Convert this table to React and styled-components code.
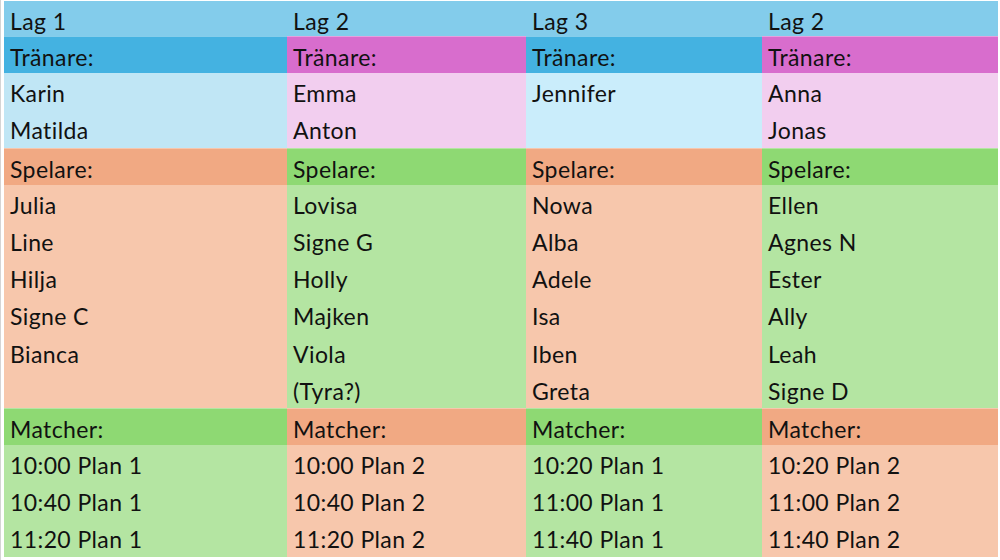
import React from 'react'
import styled, { createGlobalStyle } from 'styled-components'

const colors = {
  sky: '#83cceb',
  blue: '#44b2e1',
  blueLight: '#c0e6f5',
  blueLighter: '#caedfb',
  pink: '#d86dcd',
  pinkLight: '#f2ceef',
  orange: '#f1a983',
  orangeLight: '#f7c7ac',
  green: '#8ed973',
  greenLight: '#b4e5a2'
}

const teams = [
  {
    name: 'Lag 1',
    width: 283,
    coach: ['blue', 'blueLight'],
    player: ['orange', 'orangeLight'],
    match: ['green', 'greenLight'],
    coaches: ['Karin', 'Matilda'],
    players: ['Julia', 'Line', 'Hilja', 'Signe C', 'Bianca', ''],
    matches: ['10:00 Plan 1', '10:40 Plan 1', '11:20 Plan 1']
  },
  {
    name: 'Lag 2',
    width: 239,
    coach: ['pink', 'pinkLight'],
    player: ['green', 'greenLight'],
    match: ['orange', 'orangeLight'],
    coaches: ['Emma', 'Anton'],
    players: ['Lovisa', 'Signe G', 'Holly', 'Majken', 'Viola', '(Tyra?)'],
    matches: ['10:00 Plan 2', '10:40 Plan 2', '11:20 Plan 2']
  },
  {
    name: 'Lag 3',
    width: 236,
    coach: ['blue', 'blueLighter'],
    player: ['orange', 'orangeLight'],
    match: ['green', 'greenLight'],
    coaches: ['Jennifer', ''],
    players: ['Nowa', 'Alba', 'Adele', 'Isa', 'Iben', 'Greta'],
    matches: ['10:20 Plan 1', '11:00 Plan 1', '11:40 Plan 1']
  },
  {
    name: 'Lag 2',
    width: 236,
    coach: ['pink', 'pinkLight'],
    player: ['green', 'greenLight'],
    match: ['orange', 'orangeLight'],
    coaches: ['Anna', 'Jonas'],
    players: ['Ellen', 'Agnes N', 'Ester', 'Ally', 'Leah', 'Signe D'],
    matches: ['10:20 Plan 2', '11:00 Plan 2', '11:40 Plan 2']
  }
]

const GlobalStyle = createGlobalStyle`
  html, body {
    margin: 0;
    background: #ffffff;
  }
  body {
    font-family: Lato, "Open Sans", sans-serif;
    color: #111;
  }
`

const Sheet = styled.div`
  display: flex;
  width: 1000px;
  height: 560px;
  box-sizing: border-box;
  padding: 1px 2px 0 3px;
  border-left: 1px solid #d4d4d4;
  background: #fff;
`

const Column = styled.div`
  display: flex;
  flex-direction: column;
  width: ${p => p.$w}px;
  flex: none;
`

const Cell = styled.div`
  height: ${p => (p.$top ? 35 : 37.2)}px;
  box-sizing: border-box;
  padding: 5px 0 0 6px;
  font-size: 23px;
  line-height: 30px;
  letter-spacing: 0.4px;
  font-variant-ligatures: none;
  white-space: nowrap;
  background: ${p => colors[p.$bg]};
  border-top: ${p => (p.$line ? '1px solid rgba(255,255,255,0.35)' : 'none')};
`

const Section = ({ label, tone, items }) => (
  <>
    <Cell $bg={tone[0]} $line>{label}</Cell>
    {items.map((it, i) => (
      <Cell key={i} $bg={tone[1]}>{it}</Cell>
    ))}
  </>
)

const App = () => {
  return (
    <>
      <GlobalStyle />
      <Sheet>
        {teams.map((t, i) => (
          <Column key={i} $w={t.width}>
            <Cell $bg="sky" $top>{t.name}</Cell>
            <Section label="Tränare:" tone={t.coach} items={t.coaches} />
            <Section label="Spelare:" tone={t.player} items={t.players} />
            <Section label="Matcher:" tone={t.match} items={t.matches} />
          </Column>
        ))}
      </Sheet>
    </>
  )
}

export default App
